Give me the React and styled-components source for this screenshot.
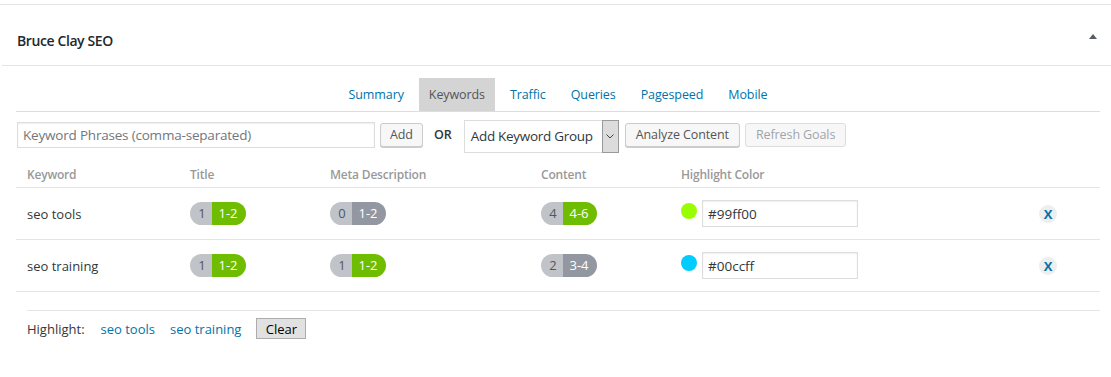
import React from "react";
import styled, { createGlobalStyle } from "styled-components";

const Global = createGlobalStyle`
  html, body { margin: 0; padding: 0; background: #fff; }
  body { font-family: "Open Sans", "Noto Sans", sans-serif; font-size: 13px; color: #32373c; }
  * { box-sizing: border-box; }
`;

const Page = styled.div`
  padding-top: 4px;
  width: 1111px;
`;

const Postbox = styled.div`
  border-top: 1px solid #e5e5e5;
`;

const Header = styled.div`
  margin-left: 2px;
  height: 61px;
  padding: 0 14px 0 15px;
  display: flex;
  align-items: center;
  justify-content: space-between;
  border-bottom: 1px solid #e5e5e5;
`;

const Title = styled.h2`
  margin: 10px 0 0;
  font-size: 14px;
  font-weight: 600;
  letter-spacing: -0.4px;
  color: #23282d;
`;

const Toggle = styled.span`
  width: 0;
  height: 0;
  border-left: 4px solid transparent;
  border-right: 4px solid transparent;
  border-bottom: 5px solid #555d66;
  margin-top: 2px;
`;

const Inside = styled.div`
  padding: 12px 11px 0 16px;
`;

const Tabs = styled.div`
  display: flex;
  justify-content: center;
  gap: 5px;
  border-bottom: 1px solid #ddd;
`;

const Tab = styled.a`
  display: block;
  height: 33px;
  line-height: 33px;
  padding: 0 10px;
  font-size: 12.5px;
  letter-spacing: -0.1px;
  color: ${(p) => (p.$active ? "#555" : "#0073aa")};
  background: ${(p) => (p.$active ? "#d4d4d4" : "transparent")};
  text-decoration: none;
`;

const Controls = styled.div`
  display: flex;
  align-items: center;
  margin-top: 6px;
  padding-left: 1px;
  height: 33px;
`;

const TextInput = styled.input`
  width: 358px;
  height: 26px;
  border: 1px solid #ddd;
  box-shadow: inset 0 1px 2px rgba(0, 0, 0, 0.07);
  padding: 0 5px;
  font: inherit;
  font-size: 13.5px;
  letter-spacing: -0.2px;
  color: #32373c;
  &::placeholder { color: #72777c; }
`;

const Button = styled.button`
  height: 24px;
  padding: 0 ${(p) => p.$px || 9}px;
  margin-left: ${(p) => p.$ml || 0}px;
  border: 1px solid #ccc;
  border-radius: 3px;
  background: #f7f7f7;
  box-shadow: 0 1px 0 #ccc;
  color: ${(p) => (p.disabled ? "#a0a5aa" : "#555")};
  font: inherit;
  font-size: 12.5px;
  letter-spacing: -0.1px;
  line-height: 22px;
  ${(p) => p.disabled && "border-color: #ddd; box-shadow: none;"}
`;

const Or = styled.span`
  margin: 0 12px 0 11px;
  font-weight: 600;
  font-size: 12.5px;
  color: #32373c;
`;

const Select = styled.div`
  display: flex;
  width: 155px;
  height: 33px;
  border: 1px solid #ddd;
  margin-top: 3px;
`;

const SelectText = styled.span`
  flex: 1;
  padding-left: 6px;
  line-height: 31px;
  font-size: 13.5px;
  letter-spacing: -0.3px;
  color: #32373c;
  white-space: nowrap;
  overflow: hidden;
`;

const SelectArrow = styled.span`
  width: 17px;
  background: #dcdcdc;
  border: 1px solid #999;
  display: flex;
  align-items: center;
  justify-content: center;
  margin: -1px -1px -1px 0;
`;

const Table = styled.div`
  margin-top: 10px;
`;

const Row = styled.div`
  display: grid;
  grid-template-columns: 163px 140px 211px 140px 358px 1fr;
  align-items: center;
  height: ${(p) => (p.$head ? 27 : 52)}px;
  border-bottom: 1px solid #e5e5e5;
`;

const HeadCell = styled.div`
  padding-left: 11px;
  font-weight: 600;
  color: #999;
  font-size: 12px;
  letter-spacing: -0.2px;
`;

const Cell = styled.div`
  padding-left: 11px;
  display: flex;
  align-items: center;
`;

const Pill = styled.span`
  display: inline-flex;
  height: 23px;
  border-radius: 12px;
  overflow: hidden;
  line-height: 23px;
  font-size: 13px;
`;

const PillCount = styled.span`
  background: #c0c4c9;
  color: #50575e;
  width: 22px;
  text-align: center;
  padding-left: 2px;
`;

const PillGoal = styled.span`
  background: ${(p) => (p.$ok ? "#6fbd00" : "#9297a1")};
  color: #fff;
  width: 34px;
  text-align: center;
  padding-right: 2px;
`;

const Dot = styled.span`
  width: 16px;
  height: 16px;
  border-radius: 50%;
  background: ${(p) => p.$c};
  margin-top: -5px;
`;

const ColorInput = styled.input`
  margin-left: 5px;
  width: 156px;
  height: 27px;
  border: 1px solid #ddd;
  box-shadow: inset 0 1px 2px rgba(0, 0, 0, 0.07);
  padding: 0 5px;
  font: inherit;
  font-size: 13.5px;
  color: #32373c;
`;

const Remove = styled.span`
  width: 18px;
  height: 18px;
  border-radius: 50%;
  background: #eee;
  color: #0073aa;
  font-weight: 700;
  font-size: 13px;
  display: flex;
  align-items: center;
  justify-content: center;
`;

const Footer = styled.div`
  margin: 18px 0 0 11px;
  border-top: 1px solid #e5e5e5;
  padding-top: 7px;
  display: flex;
  align-items: center;
  height: 21px;
  box-sizing: content-box;
`;

const Label = styled.span`
  color: #32373c;
  margin-right: 16px;
`;

const Link = styled.a`
  color: #0073aa;
  margin-right: 15px;
  text-decoration: none;
`;

const ClearButton = styled.button`
  height: 21px;
  width: 50px;
  background: #e1e1e1;
  border: 1px solid #adadad;
  font: inherit;
  font-size: 13px;
  color: #000;
  padding: 0;
`;

const keywords = [
  { kw: "seo tools", t: [1, "1-2", true], m: [0, "1-2", false], c: [4, "4-6", true], color: "#99ff00" },
  { kw: "seo training", t: [1, "1-2", true], m: [1, "1-2", true], c: [2, "3-4", false], color: "#00ccff" },
];

const Goal = ({ v }) => (
  <Pill>
    <PillCount>{v[0]}</PillCount>
    <PillGoal $ok={v[2]}>{v[1]}</PillGoal>
  </Pill>
);

export default function App() {
  return (
    <>
      <Global />
      <Page>
        <Postbox>
          <Header>
            <Title>Bruce Clay SEO</Title>
            <Toggle />
          </Header>
          <Inside>
            <Tabs>
              {["Summary", "Keywords", "Traffic", "Queries", "Pagespeed", "Mobile"].map((t) => (
                <Tab key={t} $active={t === "Keywords"}>{t}</Tab>
              ))}
            </Tabs>
            <Controls>
              <TextInput placeholder="Keyword Phrases (comma-separated)" />
              <Button $ml={5}>Add</Button>
              <Or>OR</Or>
              <Select>
                <SelectText>Add Keyword Group</SelectText>
                <SelectArrow>
                  <svg width="8" height="5" viewBox="0 0 8 5">
                    <path d="M0.5 0.5 L4 4 L7.5 0.5" fill="none" stroke="#444" strokeWidth="1" />
                  </svg>
                </SelectArrow>
              </Select>
              <Button $ml={6} $px={10}>Analyze Content</Button>
              <Button $ml={5} $px={10} disabled>Refresh Goals</Button>
            </Controls>
            <Table>
              <Row $head>
                <HeadCell>Keyword</HeadCell>
                <HeadCell>Title</HeadCell>
                <HeadCell>Meta Description</HeadCell>
                <HeadCell>Content</HeadCell>
                <HeadCell>Highlight Color</HeadCell>
                <HeadCell />
              </Row>
              {keywords.map((k) => (
                <Row key={k.kw}>
                  <Cell>{k.kw}</Cell>
                  <Cell><Goal v={k.t} /></Cell>
                  <Cell><Goal v={k.m} /></Cell>
                  <Cell><Goal v={k.c} /></Cell>
                  <Cell>
                    <Dot $c={k.color} />
                    <ColorInput defaultValue={k.color} />
                  </Cell>
                  <Cell><Remove>X</Remove></Cell>
                </Row>
              ))}
            </Table>
            <Footer>
              <Label>Highlight:</Label>
              <Link>seo tools</Link>
              <Link>seo training</Link>
              <ClearButton>Clear</ClearButton>
            </Footer>
          </Inside>
        </Postbox>
      </Page>
    </>
  );
}
